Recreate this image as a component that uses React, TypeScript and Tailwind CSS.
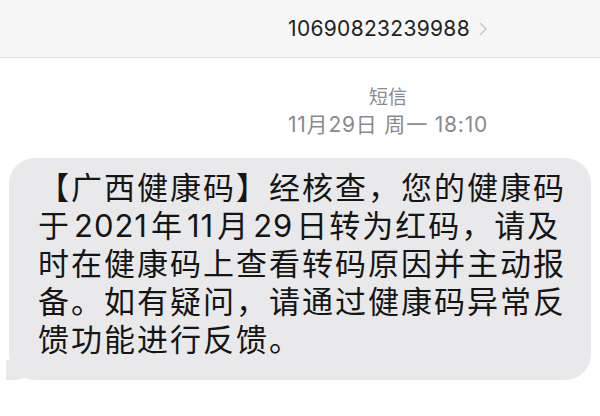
import React from 'react';

const Num: React.FC<{ children: React.ReactNode }> = ({ children }) => (
  <span className="mx-[3px] tracking-[1px]">{children}</span>
);

const App: React.FC = () => {
  return (
    <div
      className="w-[600px] h-[416px] bg-white overflow-hidden flex flex-col"
      style={{ fontFamily: 'Inter, "Noto Sans CJK SC", sans-serif' }}
    >
      {/* header */}
      <div className="h-[58px] bg-[#f6f6f6] border-b border-[#dedede] flex items-center justify-center pl-[176px] shrink-0">
        <span className="text-[21px] text-[#222] tracking-[0.3px]">10690823239988</span>
        <svg width="10" height="16" viewBox="0 0 10 16" className="ml-[8px]">
          <path d="M2 2 L8 8 L2 14" fill="none" stroke="#c9c9ce" strokeWidth="1.6" />
        </svg>
      </div>

      {/* meta */}
      <div className="flex flex-col items-center pl-[176px] mt-[30px] text-[#8a8a8e] leading-none">
        <span className="text-[19px]">短信</span>
        <span className="text-[21px] tracking-[0.8px] mt-[7px]">11月29日 周一 18:10</span>
      </div>

      {/* bubble */}
      <div className="relative mx-[9px] mt-[23px]">
        <div className="relative z-10 bg-[#e9e9eb] rounded-[26px] pl-[29px] pr-[16px] pt-[11px] pb-[21px] text-[31px] leading-[38px] tracking-[2px] text-[#151515] whitespace-nowrap">
          <div>【广西健康码】经核查，您的健康码</div>
          <div>
            于<Num>2021</Num>年<Num>11</Num>月<Num>29</Num>日转为红码，请及
          </div>
          <div>时在健康码上查看转码原因并主动报</div>
          <div>备。如有疑问，请通过健康码异常反</div>
          <div>馈功能进行反馈。</div>
        </div>
        <div className="absolute left-[-3px] bottom-[0px] w-[24px] h-[20px] bg-[#e9e9eb] rounded-br-[14px]" />
        <div className="absolute left-[-12px] bottom-[0px] w-[9px] h-[24px] bg-white rounded-br-[9px] z-20" />
      </div>
    </div>
  );
};

export default App;
